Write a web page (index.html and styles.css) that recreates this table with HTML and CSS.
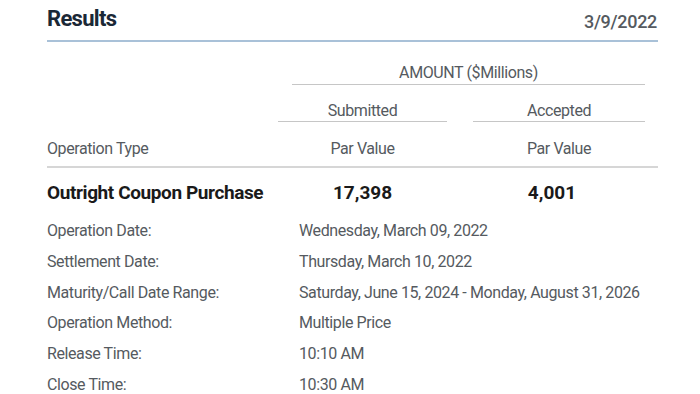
FILE: index.html
```html
<!DOCTYPE html>
<html>
<head>
<meta charset="utf-8">
<link rel="stylesheet" href="styles.css">
</head>
<body>
<div class="page">
  <div class="header">
    <h1 class="title">Results</h1>
    <div class="date">3/9/2022</div>
  </div>
  <div class="table">
    <div class="amount">AMOUNT ($Millions)</div>
    <div class="sub c-sub">Submitted</div>
    <div class="sub c-acc">Accepted</div>
    <div class="head-row">
      <div class="h-type">Operation Type</div>
      <div class="h-par c-sub">Par Value</div>
      <div class="h-par c-acc">Par Value</div>
    </div>
    <div class="op-name">Outright Coupon Purchase</div>
    <div class="num c-sub">17,398</div>
    <div class="num c-acc">4,001</div>
  </div>
  <dl class="details">
    <dt>Operation Date:</dt><dd>Wednesday, March 09, 2022</dd>
    <dt>Settlement Date:</dt><dd>Thursday, March 10, 2022</dd>
    <dt>Maturity/Call Date Range:</dt><dd>Saturday, June 15, 2024 - Monday, August 31, 2026</dd>
    <dt>Operation Method:</dt><dd>Multiple Price</dd>
    <dt>Release Time:</dt><dd>10:10 AM</dd>
    <dt>Close Time:</dt><dd>10:30 AM</dd>
  </dl>
</div>
</body>
</html>
```
FILE: styles.css
```css
html, body {
  margin: 0;
  padding: 0;
  background: #ffffff;
}
body {
  font-family: Roboto, "Liberation Sans", sans-serif;
  color: #555a60;
  font-size: 16px;
  letter-spacing: -0.4px;
}
.page {
  width: 611px;
  margin-left: 47px;
}
.header {
  display: flex;
  justify-content: space-between;
  align-items: flex-end;
  height: 40px;
  border-bottom: 2px solid #a9c1d8;
  box-sizing: content-box;
}
.title {
  margin: 0;
  font-size: 22px;
  font-weight: 700;
  color: #1b2836;
  line-height: 26px;
  padding-bottom: 8px;
  letter-spacing: -0.7px;
}
.date {
  font-size: 18px;
  font-weight: 500;
  color: #555a60;
  line-height: 22px;
  padding-bottom: 7px;
  padding-right: 1px;
  letter-spacing: -0.3px;
}
.table {
  display: grid;
  grid-template-columns: 231px 169px 26px 172px 13px;
  margin-top: 20px;
}
.amount {
  grid-column: 2 / 5;
  margin-left: 14px;
  text-align: center;
  line-height: 20px;
  padding-top: 1px;
  padding-bottom: 1px;
  border-bottom: 1px solid #c6c6c6;
}
.sub {
  text-align: center;
  line-height: 20px;
  margin-top: 16px;
  padding-bottom: 0;
  border-bottom: 1px solid #c6c6c6;
}
.c-sub { grid-column: 2; }
.c-acc { grid-column: 4; }
.head-row {
  grid-column: 1 / 6;
  display: grid;
  grid-template-columns: subgrid;
  margin-top: 17px;
  padding-bottom: 7px;
  border-bottom: 2px solid #d6d6d6;
  line-height: 20px;
}
.h-type { grid-column: 1; }
.h-par { text-align: center; }
.op-name {
  grid-column: 1;
  font-size: 19px;
  font-weight: 700;
  color: #1a1a1a;
  line-height: 24px;
  margin-top: 13px;
  letter-spacing: -0.4px;
}
.num {
  font-size: 19px;
  font-weight: 700;
  color: #1a1a1a;
  line-height: 24px;
  margin-top: 13px;
  text-align: center;
  letter-spacing: 0;
}
.num.c-acc { padding-right: 14px; }
.details {
  display: grid;
  grid-template-columns: 252px 1fr;
  row-gap: 14.8px;
  margin: 18px 0 0 0;
  line-height: 16px;
}
.details dt, .details dd {
  margin: 0;
}
```
